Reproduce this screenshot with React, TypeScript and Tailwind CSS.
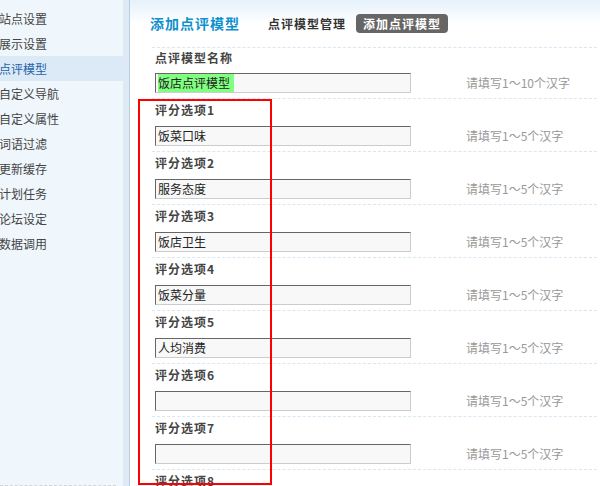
import {memo} from 'react'

const menu = ['站点设置', '展示设置', '点评模型', '自定义导航', '自定义属性', '词语过滤', '更新缓存', '计划任务', '论坛设定', '数据调用']

const options = [
    {label: '评分选项1', value: '饭菜口味'},
    {label: '评分选项2', value: '服务态度'},
    {label: '评分选项3', value: '饭店卫生'},
    {label: '评分选项4', value: '饭菜分量'},
    {label: '评分选项5', value: '人均消费'},
    {label: '评分选项6', value: ''},
    {label: '评分选项7', value: ''},
    {label: '评分选项8', value: ''},
]

const Sidebar = memo(() => {
    return (
        <aside className="flex h-full w-[130px] shrink-0">
            <div className="flex w-[123px] flex-col bg-[#eff7fc] pt-[6px]">
                {menu.map((name) => (
                    <div
                        key={name}
                        className={
                            name === '点评模型'
                                ? 'h-[25px] leading-[25px] bg-[#dbeaf6] text-[#1d63a8] -indent-[1px]'
                                : 'h-[25px] leading-[25px] text-[#444] -indent-[1px]'
                        }
                    >
                        {name}
                    </div>
                ))}
                <div className="w-[116px] flex-1 border-b border-dashed border-[#d4d4d4]" />
            </div>
            <div className="w-[6px] bg-[#dde9f5]" />
            <div className="w-px bg-[#b8cfe2]" />
        </aside>
    )
})

Sidebar.displayName = 'Sidebar'

const FieldBox = ({value, marked}: {value: string; marked?: boolean}) => (
    <div className="h-[20px] w-[256px] border border-t-[#666] border-l-[#666] border-r-[#ccc] border-b-[#ccc] bg-[#f8f8f8] pl-[2px] leading-[18px] text-[#222]">
        {marked ? <span className="inline-block h-[18px] bg-[#80ff80] pr-[4px]">{value}</span> : value}
    </div>
)

const App = () => {
    return (
        <div className="flex h-[486px] w-[600px] overflow-hidden bg-white font-['Noto_Sans_CJK_SC',sans-serif] text-[12px]">
            <Sidebar />
            <main className="relative flex-1 bg-linear-to-b from-[#e6f1fa] via-white via-[5%] to-white">
                <div className="flex h-[47px] items-center pl-[20px]">
                    <h1 className="text-[14px] font-bold tracking-[1px] text-[#0f90cf]">添加点评模型</h1>
                    <span className="ml-[28px] font-bold tracking-[1px] text-[#333]">点评模型管理</span>
                    <span className="ml-[10px] flex h-[19px] items-center rounded-[4px] bg-[#666] px-[7px] font-bold tracking-[1px] text-white">
                        添加点评模型
                    </span>
                </div>

                <div className="ml-[22px] mr-[3px] border-t border-dashed border-[#d8e7f4]">
                    <div className="border-b border-dashed border-[#d8e7f4] pb-[5px] pl-[3px]">
                        <div className="h-[18px] leading-[20px] font-bold tracking-[1px] text-[#444]">点评模型名称</div>
                        <div className="mt-[7px] flex items-center">
                            <FieldBox value="饭店点评模型" marked />
                            <span className="ml-[55px] text-[#999]">请填写1～10个汉字</span>
                        </div>
                    </div>
                    {options.map((opt) => (
                        <div key={opt.label} className="border-b border-dashed border-[#d8e7f4] pb-[5px] pl-[3px]">
                            <div className="h-[18px] leading-[21px] font-bold tracking-[1px] text-[#444]">{opt.label}</div>
                            <div className="mt-[9px] flex items-center">
                                <FieldBox value={opt.value} />
                                <span className="ml-[55px] text-[#999]">请填写1～5个汉字</span>
                            </div>
                        </div>
                    ))}
                </div>

                {/* outline around the score option column */}
                <div className="absolute left-[8px] top-[99px] h-[386px] w-[134px] border-2 border-[#ff0000]" />
            </main>
        </div>
    )
}

export default App
